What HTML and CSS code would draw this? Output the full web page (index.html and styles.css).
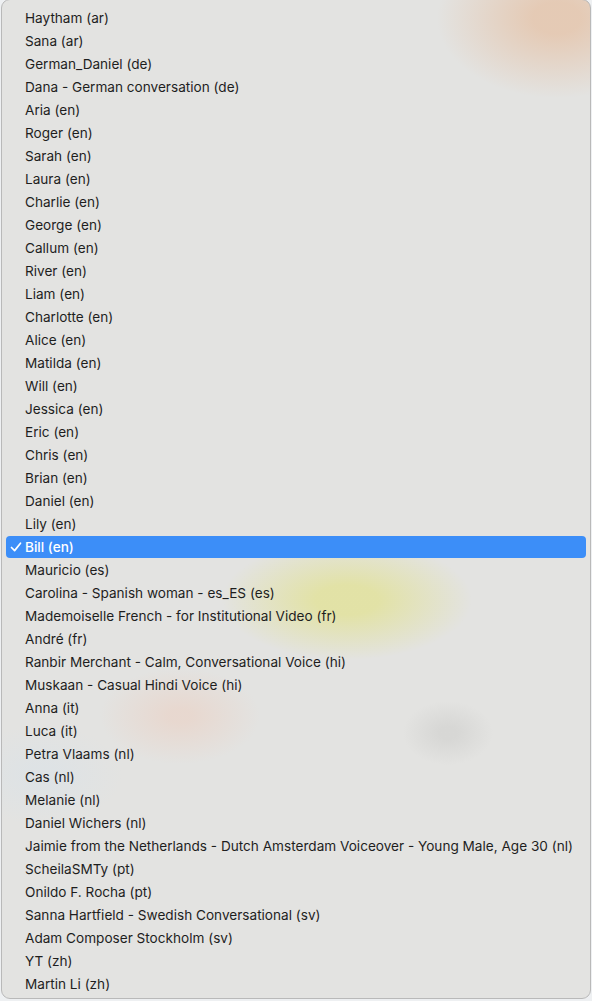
FILE: index.html
```html
<!DOCTYPE html>
<html>
  <head>
    <meta name="viewport" content="width=device-width, initial-scale=1.0">
    <link rel="stylesheet" href="styles.css">
  </head>
  <body>
    <ul class="voice-menu">
      <li>Haytham (ar)</li>
      <li>Sana (ar)</li>
      <li>German_Daniel (de)</li>
      <li>Dana - German conversation (de)</li>
      <li>Aria (en)</li>
      <li>Roger (en)</li>
      <li>Sarah (en)</li>
      <li>Laura (en)</li>
      <li>Charlie (en)</li>
      <li>George (en)</li>
      <li>Callum (en)</li>
      <li>River (en)</li>
      <li>Liam (en)</li>
      <li>Charlotte (en)</li>
      <li>Alice (en)</li>
      <li>Matilda (en)</li>
      <li>Will (en)</li>
      <li>Jessica (en)</li>
      <li>Eric (en)</li>
      <li>Chris (en)</li>
      <li>Brian (en)</li>
      <li>Daniel (en)</li>
      <li>Lily (en)</li>
      <li class="selected">
        <svg class="check" width="12" height="12" viewBox="0 0 12 12"><path d="M1.5 6.5 L4.6 9.6 L10.5 2.2" fill="none" stroke="#fff" stroke-width="1.7" stroke-linecap="round" stroke-linejoin="round"/></svg>Bill (en)
      </li>
      <li>Mauricio (es)</li>
      <li>Carolina - Spanish woman - es_ES (es)</li>
      <li>Mademoiselle French - for Institutional Video (fr)</li>
      <li>André (fr)</li>
      <li>Ranbir Merchant - Calm, Conversational Voice (hi)</li>
      <li>Muskaan - Casual Hindi Voice (hi)</li>
      <li>Anna (it)</li>
      <li>Luca (it)</li>
      <li>Petra Vlaams (nl)</li>
      <li>Cas (nl)</li>
      <li>Melanie (nl)</li>
      <li>Daniel Wichers (nl)</li>
      <li>Jaimie from the Netherlands - Dutch Amsterdam Voiceover - Young Male, Age 30 (nl)</li>
      <li>ScheilaSMTy (pt)</li>
      <li>Onildo F. Rocha (pt)</li>
      <li>Sanna Hartfield - Swedish Conversational (sv)</li>
      <li>Adam Composer Stockholm (sv)</li>
      <li>YT (zh)</li>
      <li>Martin Li (zh)</li>
    </ul>
  </body>
</html>
```

FILE: styles.css
```css
body {
  margin: 0;
  background-color: #eef0f2;
  font-family: Inter, "Liberation Sans", sans-serif;
}
.voice-menu {
  list-style: none;
  margin: -1px 1px 0 1px;
  padding: 7px 4px 2px 4px;
  width: 580px;
  border: 1px solid #b9b9b9;
  border-radius: 9px;
  background-color: #e3e3e1;
  background-image:
    radial-gradient(ellipse 120px 80px at 555px 18px, rgba(229, 196, 170, 0.8) 20%, rgba(229, 196, 170, 0) 100%),
    radial-gradient(ellipse 125px 60px at 345px 600px, rgba(226, 226, 160, 0.9) 25%, rgba(226, 226, 160, 0) 100%),
    radial-gradient(ellipse 80px 48px at 178px 716px, rgba(234, 210, 198, 0.65) 15%, rgba(234, 210, 198, 0) 100%),
    radial-gradient(ellipse 45px 32px at 446px 733px, rgba(210, 210, 208, 0.7) 20%, rgba(210, 210, 208, 0) 100%),
    radial-gradient(ellipse 80px 50px at 40px 775px, rgba(218, 226, 232, 0.55) 20%, rgba(218, 226, 232, 0) 100%);
}
.voice-menu li {
  position: relative;
  height: 23px;
  line-height: 23px;
  padding-left: 19px;
  font-size: 13.6px;
  color: #1e1e1e;
  white-space: nowrap;
  border-radius: 4px;
}
.voice-menu li.selected {
  height: 22px;
  line-height: 22px;
  margin-bottom: 1px;
  background-color: #3c8ef8;
  color: #ffffff;
  font-weight: 500;
}
.check {
  position: absolute;
  left: 4px;
  top: 5px;
}
```
